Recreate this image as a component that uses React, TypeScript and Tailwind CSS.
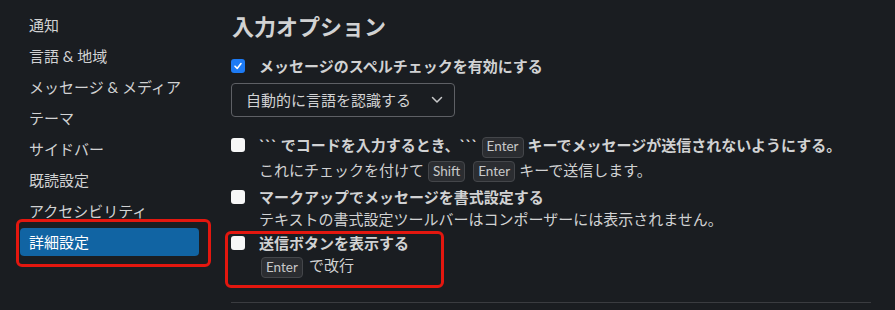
import React from "react";

const navItems = [
  "通知",
  "言語 & 地域",
  "メッセージ & メディア",
  "テーマ",
  "サイドバー",
  "既読設定",
  "アクセシビリティ",
  "詳細設定",
];

const Kbd: React.FC<{ children: React.ReactNode; first?: boolean }> = ({ children, first }) => (
  <span
    className={
      (first ? "ml-[2px] mr-[6px] " : "mx-[4px] ") +
      "inline-flex h-[21px] items-center rounded-[4px] border border-[#44464a] bg-[#2b2d31] px-[4px] align-middle text-[13.5px] font-normal leading-none text-[#c8c9ca]"
    }
  >
    {children}
  </span>
);

const Box: React.FC<{ checked?: boolean }> = ({ checked }) =>
  checked ? (
    <span className="mt-[4px] flex h-[14px] w-[14px] shrink-0 items-center justify-center rounded-[3px] bg-[#1d7bf5]">
      <svg width="10" height="10" viewBox="0 0 10 10" fill="none">
        <path d="M2 5.2 L4.2 7.4 L8 2.6" stroke="#ffffff" strokeWidth="1.6" strokeLinecap="round" strokeLinejoin="round" />
      </svg>
    </span>
  ) : (
    <span className="mt-[4px] h-[14px] w-[14px] shrink-0 rounded-[3px] bg-[#f7f7f7]" />
  );

export default function App() {
  return (
    <div
      className="flex h-[310px] w-[895px] overflow-hidden bg-[#1a1d21] text-[#d1d2d3]"
      style={{ fontFamily: 'Lato, "Noto Sans CJK JP", sans-serif' }}
    >
      <nav className="flex w-[231px] shrink-0 flex-col gap-[3px] pl-[20px] pt-[11px]">
        {navItems.map((item) => {
          const active = item === "詳細設定";
          return (
            <div key={item} className="relative">
              <div
                className={
                  active
                    ? "flex h-[28px] w-[179px] items-center rounded-[4px] bg-[#1164a3] pl-[9px] text-[15px] text-white"
                    : "flex h-[28px] w-[179px] items-center pl-[9px] text-[15px] text-[#d1d2d3]"
                }
              >
                {item}
              </div>
              {active && (
                <div className="pointer-events-none absolute left-[-4px] top-[-9px] h-[48px] w-[195px] rounded-[6px] border-[3px] border-[#e3170f]" />
              )}
            </div>
          );
        })}
      </nav>

      <main className="flex w-[640px] flex-col">
        <h2 className="mt-[12px] h-[30px] pl-px text-[22px] font-bold leading-[30px] text-[#d1d2d3]">
          入力オプション
        </h2>

        <div className="mt-[13px] flex items-start gap-[14px]">
          <Box checked />
          <div className="text-[15px] font-bold leading-[22px]">メッセージのスペルチェックを有効にする</div>
        </div>

        <div className="mt-[6px] flex h-[34px] w-[224px] items-center justify-between rounded-[4px] border border-[#5e6065] pl-[14px] pr-[11px] text-[15px] text-[#d1d2d3]">
          <span>自動的に言語を認識する</span>
          <svg width="12" height="8" viewBox="0 0 12 8" fill="none">
            <path d="M1.5 1.5 L6 6 L10.5 1.5" stroke="#c8c9ca" strokeWidth="1.5" strokeLinecap="round" strokeLinejoin="round" />
          </svg>
        </div>

        <div className="mt-[17px] flex items-start gap-[14px]">
          <Box />
          <div className="text-[15px] leading-[22px]">
            <div className="font-bold">
              ``` でコードを入力するとき、```
              <Kbd>Enter</Kbd>
              キーでメッセージが送信されないようにする。
            </div>
            <div className="mt-px">
              これにチェックを付けて
              <Kbd>Shift</Kbd>
              <Kbd>Enter</Kbd>
              キーで送信します。
            </div>
          </div>
        </div>

        <div className="mt-[4px] flex items-start gap-[14px]">
          <Box />
          <div className="text-[15px] leading-[22px]">
            <div className="font-bold">マークアップでメッセージを書式設定する</div>
            <div>テキストの書式設定ツールバーはコンポーザーには表示されません。</div>
          </div>
        </div>

        <div className="relative mt-[2px] flex items-start gap-[14px]">
          <Box />
          <div className="text-[15px] leading-[22px]">
            <div className="font-bold">送信ボタンを表示する</div>
            <div>
              <Kbd first>Enter</Kbd>
              で改行
            </div>
          </div>
          <div className="pointer-events-none absolute left-[-6px] top-[-1px] h-[57px] w-[219px] rounded-[6px] border-[3px] border-[#e3170f]" />
        </div>

        <div className="mt-[24px] h-px w-[640px] bg-[#3a3c40]" />
      </main>
    </div>
  );
}
